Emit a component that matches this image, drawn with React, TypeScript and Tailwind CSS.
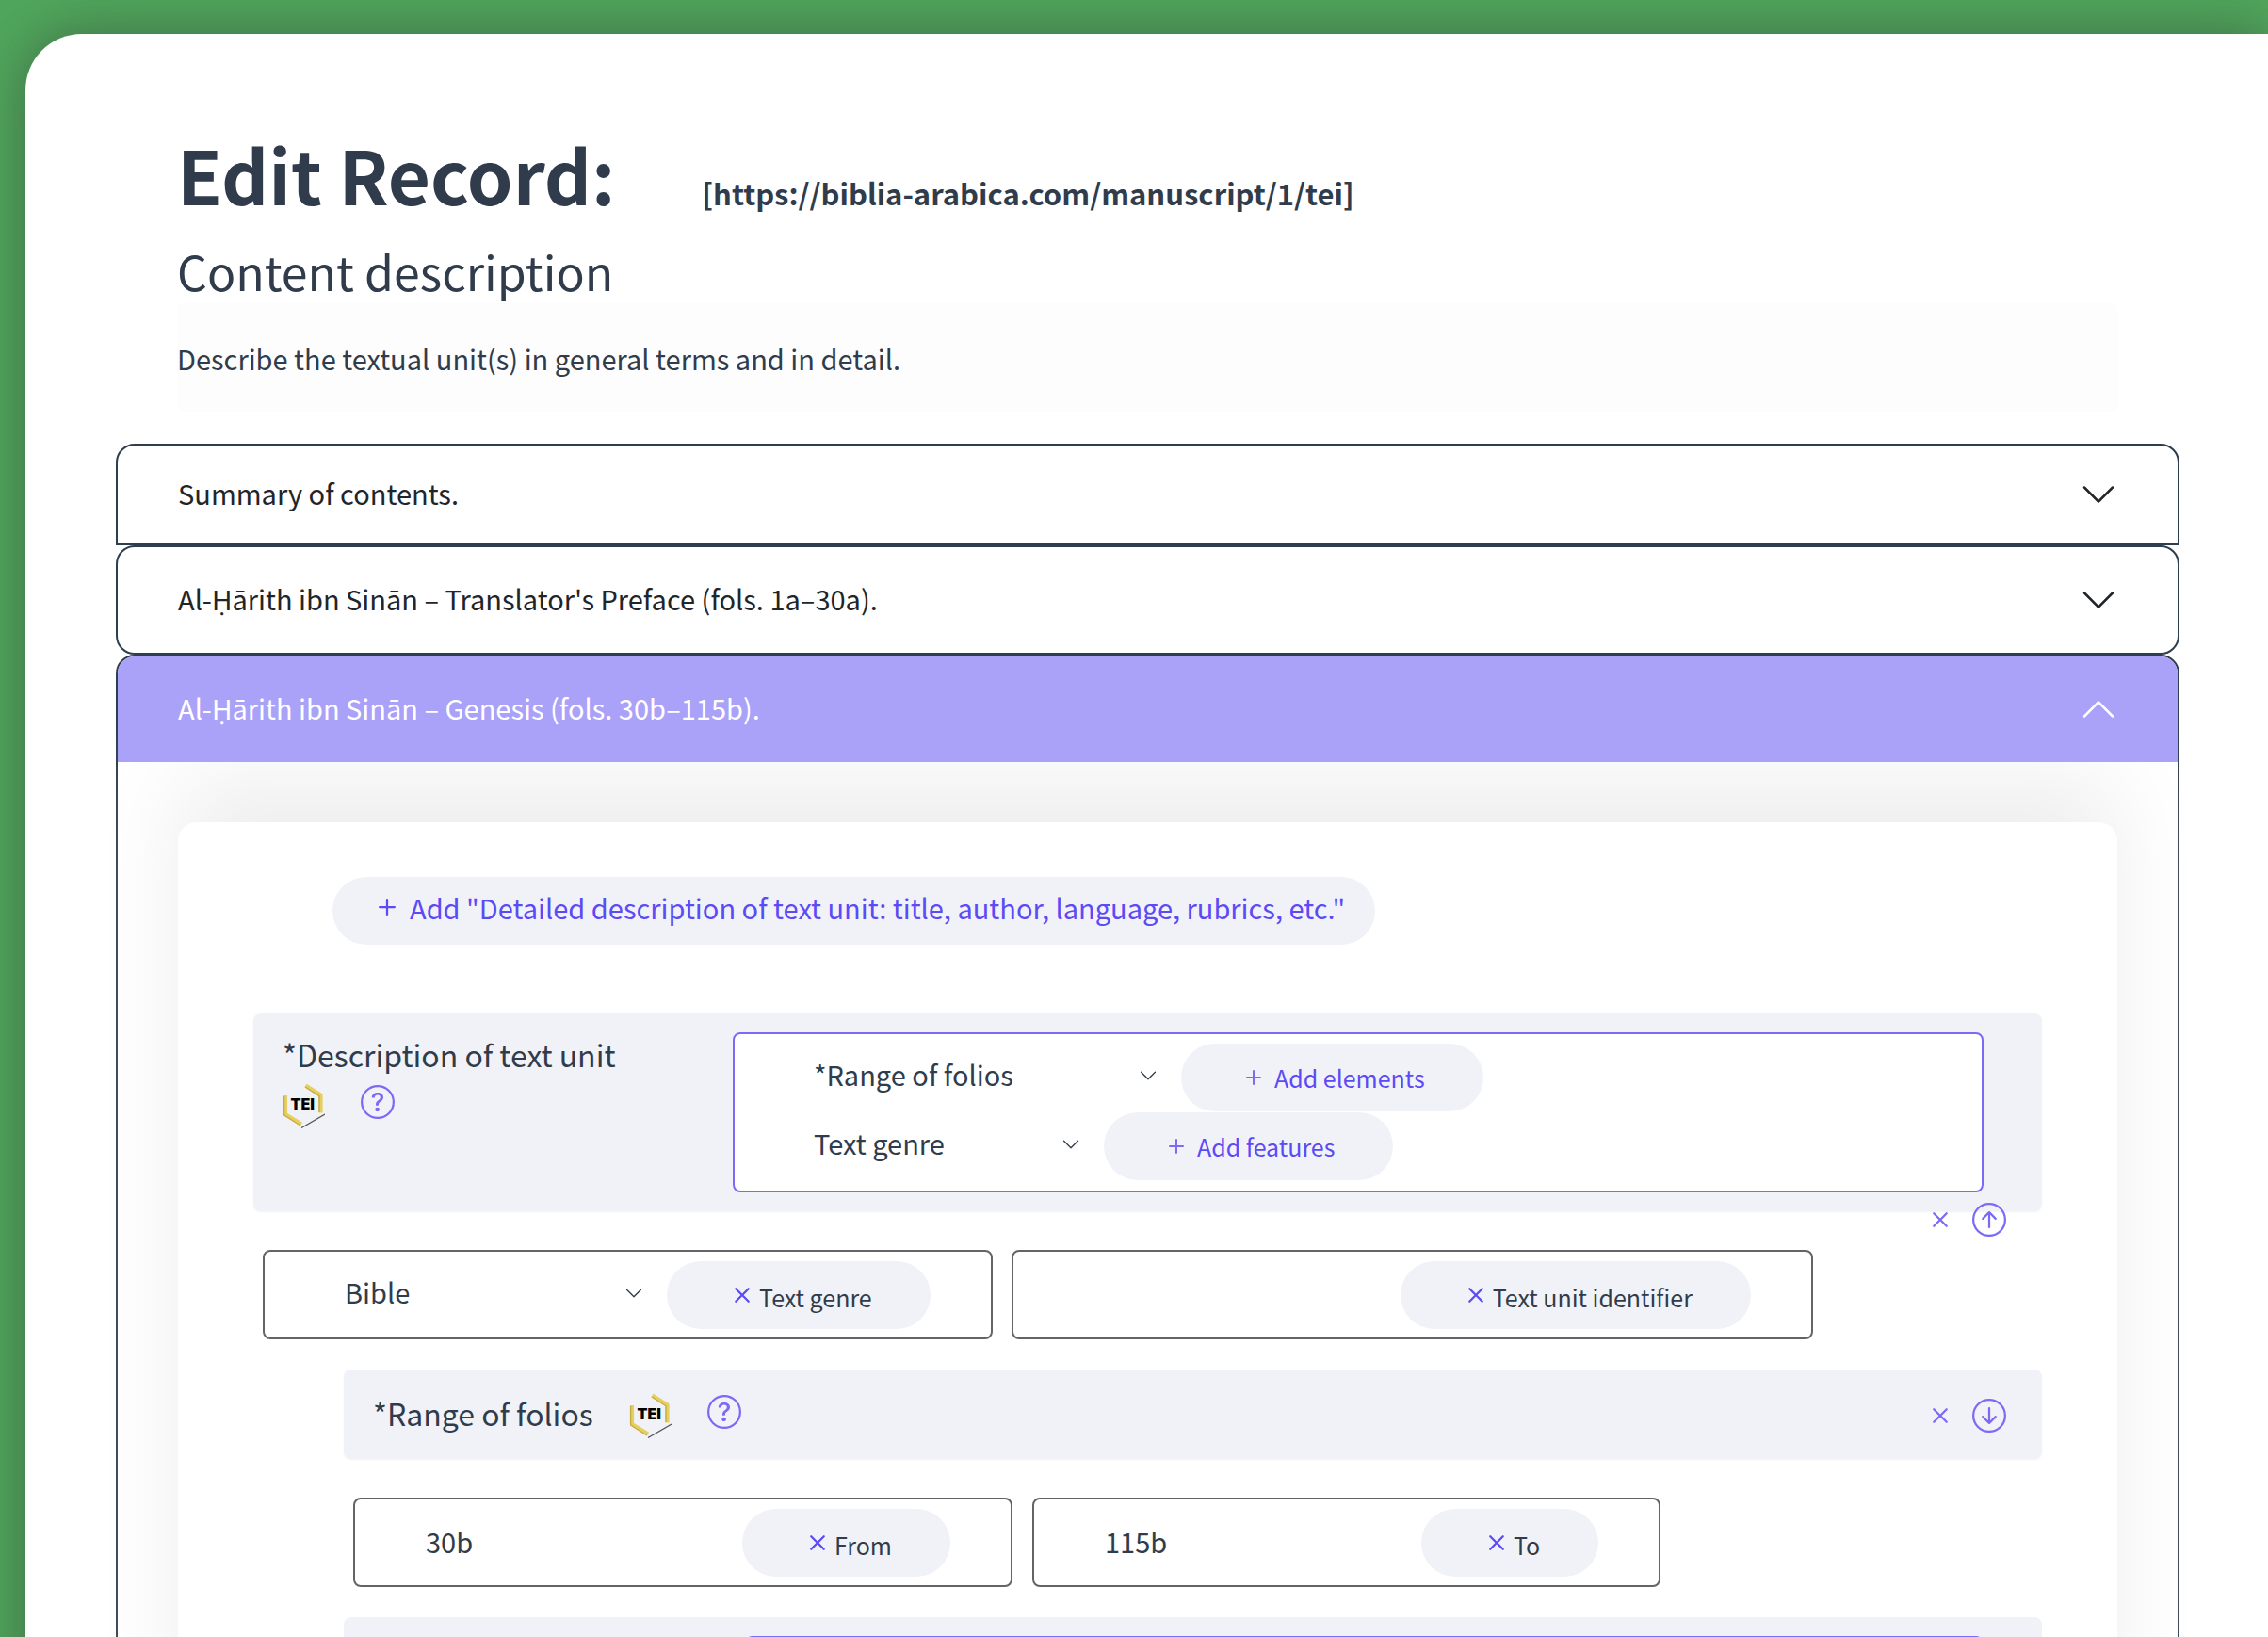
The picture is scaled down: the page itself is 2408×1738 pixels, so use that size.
import type { ReactNode } from "react";
import {
  BsArrowDownCircle,
  BsArrowUpCircle,
  BsChevronDown,
  BsChevronUp,
  BsPlus,
  BsQuestionCircle,
  BsX,
} from "react-icons/bs";

function TeiLogo() {
  return (
    <svg viewBox="0 0 45 48" className="h-12 w-[45px] shrink-0" role="img" aria-label="TEI">
      <g fill="none" strokeLinejoin="round">
        <path d="M24.5 2.5 40.500 12.500V31.500" stroke="#e6cf5f" strokeWidth="4.200" />
        <path d="M24 4 39 13.800V31" stroke="#c4ab42" strokeWidth="1.300" />
        <path d="M3 13V33L20 43.500" stroke="#e6cf5f" strokeWidth="4.200" />
        <path d="M1.600 14V34L19 45" stroke="#c4ab42" strokeWidth="1.300" />
        <path d="M20 47.500 45 33" stroke="#55555a" strokeWidth="1.300" />
      </g>
      <text
        x="8.500"
        y="28"
        fontFamily="Inter, sans-serif"
        fontWeight="900"
        fontSize="16"
        fill="#000"
      >
        TEI
      </text>
    </svg>
  );
}

function HelpButton() {
  return (
    <button type="button" aria-label="Help" className="pt-0.5 text-[#7a6af5]">
      <BsQuestionCircle className="size-9" />
    </button>
  );
}

function AddPill({ label }: { label: string }) {
  return (
    <button
      type="button"
      className="flex h-[72px] items-center rounded-full bg-[#f1f2f8] pr-[62px] pl-[61px] text-[25px] leading-9 text-[#5b4af5]"
    >
      <BsPlus className="size-8 text-[#7a6af5]" />
      <span className="ml-1.5">{label}</span>
    </button>
  );
}

function RemovePill({ label }: { label: string }) {
  return (
    <button
      type="button"
      className="flex h-[72px] items-center rounded-full bg-[#f1f2f8] px-[62px] text-[25px] leading-9 text-[#303c4b]"
    >
      <BsX className="size-9 text-[#5b4af5]" />
      <span className="pt-1">{label}</span>
    </button>
  );
}

function Choice({ name, value, width }: { name: string; value: string; width: string }) {
  return (
    <div className={`relative mr-[25px] flex h-[72px] items-center pb-1 ${width}`}>
      <select
        aria-label={name}
        defaultValue={value}
        className="h-full w-full appearance-none bg-transparent pb-1 text-[29px] leading-[46px] text-[#303c4b]"
      >
        <option>{value}</option>
      </select>
      <BsChevronDown className="pointer-events-none absolute right-0 size-5 text-[#303c4b]" />
    </div>
  );
}

function Frame({ children, className }: { children: ReactNode; className: string }) {
  return (
    <div
      className={`flex h-[95px] items-center rounded-lg border-2 border-[#646468] bg-white ${className}`}
    >
      {children}
    </div>
  );
}

function RowActions({ up }: { up?: boolean }) {
  return (
    <div className="flex items-center gap-4 text-[#7a6af5]">
      <button type="button" aria-label="Remove">
        <BsX className="size-9" />
      </button>
      <button type="button" aria-label={up ? "Move up" : "Move down"}>
        {up ? <BsArrowUpCircle className="size-9" /> : <BsArrowDownCircle className="size-9" />}
      </button>
    </div>
  );
}

export default function App() {
  return (
    <div className="h-screen overflow-hidden bg-[#50a75c] pt-9 pl-[27px] font-['Noto_Sans_CJK_SC','Noto_Sans',sans-serif] text-[#303c4b]">
      <main className="min-h-full rounded-l-[60px] bg-white pt-[102px] pr-[94px] pl-24 shadow-[0_0_60px_rgba(50,50,50,0.5)]">
        <header className="px-[65px]">
          <div className="flex items-baseline gap-[92px]">
            <h1 className="text-[78px] leading-[92px] font-bold">Edit Record:</h1>
            <p className="text-[31px] leading-10 font-bold">
              [https://biblia-arabica.com/manuscript/1/tei]
            </p>
          </div>
          <h2 className="pt-[22px] text-[50px] leading-[70px]">Content description</h2>
          <p className="flex h-[115px] items-center rounded-lg bg-[#fdfdfd] text-[29px] leading-9">
            Describe the textual unit(s) in general terms and in detail.
          </p>
        </header>

        <div className="mt-[34px]">
          <section className="rounded-t-[20px] border-2 border-[#2f3e4e]">
            <button
              type="button"
              className="flex h-[104px] w-full items-center justify-between px-16 text-[29px] leading-9 text-[#212529]"
            >
              <span className="pb-1">Summary of contents.</span>
              <BsChevronDown className="size-10" />
            </button>
          </section>
          <section className="rounded-[20px] border-2 border-[#2f3e4e]">
            <button
              type="button"
              className="flex h-28 w-full items-center justify-between px-16 text-[29px] leading-9 text-[#212529]"
            >
              <span className="pb-1">
                Al-Ḥārith ibn Sinān – Translator's Preface (fols. 1a–30a).
              </span>
              <BsChevronDown className="size-10" />
            </button>
          </section>
          <section className="rounded-t-[20px] border-2 border-[#2f3e4e]">
            <button
              type="button"
              className="relative z-10 flex h-28 w-full items-center justify-between rounded-t-[18px] bg-[#aaa1f8] px-16 text-[29px] leading-9 text-white"
            >
              <span className="pb-1">Al-Ḥārith ibn Sinān – Genesis (fols. 30b–115b).</span>
              <BsChevronUp className="size-10" />
            </button>

            <div className="relative mx-16 mt-16 rounded-[20px] bg-white pt-[58px] pr-20 pb-20 pl-20 shadow-[0_-48px_96px_#eeeeee]">
              <button
                type="button"
                className="ml-[84px] flex h-[72px] items-center rounded-full bg-[#f1f2f8] pr-8 pb-2 pl-10 text-[29px] leading-9 text-[#5b4af5]"
              >
                <BsPlus className="size-9" />
                <span className="ml-1.5">
                  Add "Detailed description of text unit: title, author, language, rubrics, etc."
                </span>
              </button>

              <div className="mt-[73px] flex h-[210px] justify-between rounded-lg bg-[#f1f2f8] py-5 pr-[62px] pl-[31px] shadow-[0_1px_2px_#f1f2f8]">
                <div>
                  <h3 className="text-[32px] leading-[46px]">*Description of text unit</h3>
                  <div className="mt-2 flex items-start gap-[38px]">
                    <TeiLogo />
                    <HelpButton />
                  </div>
                </div>
                <div className="flex w-[1328px] flex-col gap-px rounded-lg border-2 border-[#7a6af5] bg-white py-2.5 pl-[84px]">
                  <div className="flex">
                    <Choice name="Element" value="*Range of folios" width="w-[365px]" />
                    <AddPill label="Add elements" />
                  </div>
                  <div className="flex">
                    <Choice name="Feature" value="Text genre" width="w-[283px]" />
                    <AddPill label="Add features" />
                  </div>
                </div>
              </div>

              <div className="relative z-10 -mt-[9px] flex h-9 justify-end pr-[38px]">
                <RowActions up />
              </div>

              <div className="mt-3.5 ml-2.5 flex gap-5">
                <Frame className="pr-16 pl-[85px]">
                  <Choice name="Text genre" value="Bible" width="w-[317px]" />
                  <RemovePill label="Text genre" />
                </Frame>
                <Frame className="pr-16 pl-[74px]">
                  <input
                    aria-label="Text unit identifier"
                    className="mr-4 h-[72px] w-[321px] text-[29px] leading-9 outline-none"
                  />
                  <RemovePill label="Text unit identifier" />
                </Frame>
              </div>

              <div className="mt-8 ml-24 flex h-[95px] items-center rounded-lg bg-[#f1f2f8] pt-0.5 pr-[38px] pl-[31px] shadow-[0_1px_2px_#f1f2f8]">
                <h3 className="pb-1.5 text-[32px] leading-[46px]">*Range of folios</h3>
                <div className="mr-auto ml-[38px] flex items-start gap-[38px]">
                  <TeiLogo />
                  <HelpButton />
                </div>
                <RowActions />
              </div>

              <div className="mt-[41px] ml-[106px] flex gap-[21px]">
                <Frame className="pr-16 pl-[75px]">
                  <input
                    aria-label="From"
                    defaultValue="30b"
                    className="mr-4 h-[72px] w-80 pb-1 text-[29px] leading-9 outline-none"
                  />
                  <RemovePill label="From" />
                </Frame>
                <Frame className="pr-16 pl-[75px]">
                  <input
                    aria-label="To"
                    defaultValue="115b"
                    className="mr-4 h-[72px] w-80 pb-1 text-[29px] leading-9 outline-none"
                  />
                  <RemovePill label="To" />
                </Frame>
              </div>

              <div className="mt-8 ml-24 flex h-[210px] justify-end rounded-lg bg-[#f1f2f8] py-5 pr-[62px]">
                <div className="w-[1315px] rounded-lg border-2 border-[#7a6af5] bg-white" />
              </div>
            </div>
          </section>
        </div>
      </main>
    </div>
  );
}
